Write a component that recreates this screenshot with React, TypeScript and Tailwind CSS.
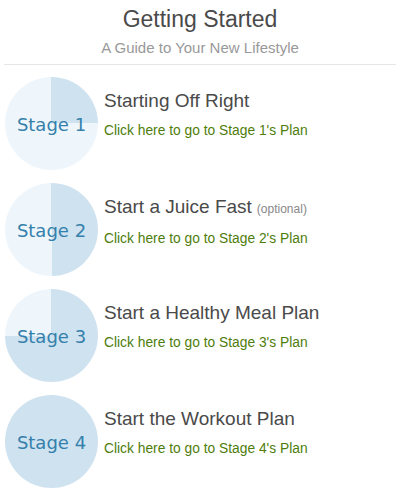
import React from "react";

const stages = [
  { n: 1, title: "Starting Off Right", bg: "bg-[conic-gradient(#cfe2f0_0_25%,#eef6fc_0)]" },
  { n: 2, title: "Start a Juice Fast", optional: true, bg: "bg-[conic-gradient(#cfe2f0_0_50%,#eef6fc_0)]" },
  { n: 3, title: "Start a Healthy Meal Plan", bg: "bg-[conic-gradient(#cfe2f0_0_75%,#eef6fc_0)]" },
  { n: 4, title: "Start the Workout Plan", bg: "bg-[#cfe2f0]" },
];

export default function App() {
  return (
    <div className="w-[400px] h-[501px] bg-white font-[family-name:'Liberation_Sans',Arial,sans-serif] overflow-hidden">
      <div className="mx-[4px] border-b border-[#e6e6e6] pt-[5px] pb-[6px] text-center">
        <div className="text-[23px] leading-[28px] text-[#4a4a4a]">Getting Started</div>
        <div className="mt-[5px] text-[15px] leading-[20px] text-[#999]">A Guide to Your New Lifestyle</div>
      </div>
      <div className="flex flex-col gap-[13px] mt-[12px] pl-[5px]">
        {stages.map((s) => (
          <div key={s.n} className="flex items-start gap-[6px]">
            <div
              className={`w-[93px] h-[93px] rounded-full flex items-center justify-center shrink-0 ${s.bg}`}
            >
              <span className="font-[family-name:'DejaVu_Sans',Verdana,sans-serif] text-[18px] text-[#3580ab] mt-[1px]">
                Stage {s.n}
              </span>
            </div>
            <div className="pt-[12px]">
              <div className="text-[19px] leading-[24px] text-[#4a4a4a]">
                {s.title}
                {s.optional && <span className="ml-[5px] text-[12px] text-[#888]">(optional)</span>}
              </div>
              <div className="mt-[8px] text-[13.8px] leading-[20px] text-[#4e7d0b]">
                Click here to go to Stage {s.n}'s Plan
              </div>
            </div>
          </div>
        ))}
      </div>
    </div>
  );
}
